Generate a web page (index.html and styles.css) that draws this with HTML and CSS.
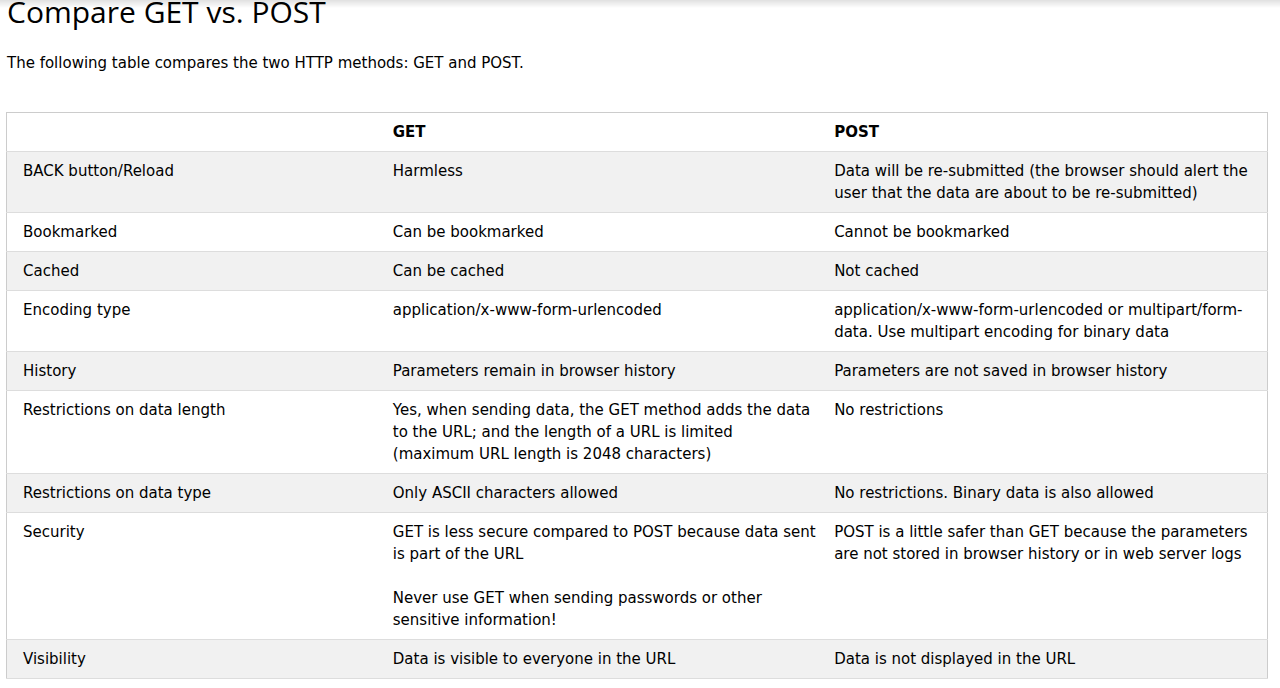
FILE: index.html
```html
<!DOCTYPE html>
<html lang="en">
<head>
<meta charset="utf-8">
<title>Compare GET vs. POST</title>
<link rel="stylesheet" href="styles.css">
</head>
<body>
<div class="topshadow"></div>
<main class="content">
  <h2 class="title">Compare GET vs. POST</h2>
  <p class="intro">The following table compares the two HTTP methods: GET and POST.</p>
  <table class="cmp">
    <colgroup>
      <col class="c1">
      <col class="c2">
      <col class="c3">
    </colgroup>
    <thead>
      <tr><th></th><th>GET</th><th>POST</th></tr>
    </thead>
    <tbody>
      <tr><td>BACK button/Reload</td><td>Harmless</td><td>Data will be re-submitted (the browser should alert the user that the data are about to be re-submitted)</td></tr>
      <tr><td>Bookmarked</td><td>Can be bookmarked</td><td>Cannot be bookmarked</td></tr>
      <tr><td>Cached</td><td>Can be cached</td><td>Not cached</td></tr>
      <tr><td>Encoding type</td><td>application/x-www-form-urlencoded</td><td>application/x-www-form-urlencoded or multipart/form-data. Use multipart encoding for binary data</td></tr>
      <tr><td>History</td><td>Parameters remain in browser history</td><td>Parameters are not saved in browser history</td></tr>
      <tr><td>Restrictions on data length</td><td>Yes, when sending data, the GET method adds the data to the URL; and the length of a URL is limited (maximum URL length is 2048 characters)</td><td>No restrictions</td></tr>
      <tr><td>Restrictions on data type</td><td>Only ASCII characters allowed</td><td>No restrictions. Binary data is also allowed</td></tr>
      <tr><td>Security</td><td>GET is less secure compared to POST because data sent is part of the URL<br><br>Never use GET when sending passwords or other sensitive information!</td><td>POST is a little safer than GET because the parameters are not stored in browser history or in web server logs</td></tr>
      <tr><td>Visibility</td><td>Data is visible to everyone in the URL</td><td>Data is not displayed in the URL</td></tr>
    </tbody>
  </table>
</main>
</body>
</html>
```

FILE: styles.css
```css
html, body {
  margin: 0;
  padding: 0;
  background: #fff;
}
body {
  font-family: "DejaVu Sans", Verdana, sans-serif;
  font-size: 15px;
  line-height: 22px;
  color: #000;
}
.topshadow {
  position: fixed;
  top: 0;
  left: 0;
  right: 0;
  height: 8px;
  background: linear-gradient(to bottom, rgba(0,0,0,0.12), rgba(0,0,0,0));
  pointer-events: none;
}
.content {
  padding: 0 12px 0 6px;
}
.title {
  font-family: "Open Sans", "Segoe UI", sans-serif;
  font-weight: 400;
  font-size: 30px;
  line-height: 40px;
  margin: -8px 0 0 1px;
  color: #000;
}
.intro {
  margin: 20px 0 38px 1px;
  color: #000;
}
.cmp {
  width: 100%;
  border-collapse: collapse;
  border: 1px solid #ccc;
  table-layout: fixed;
}
.c1 { width: 30%; }
.c2 { width: 35%; }
.c3 { width: 35%; }
.cmp th, .cmp td {
  padding: 8px 8px;
  text-align: left;
  vertical-align: top;
  font-weight: 400;
}
.cmp th {
  font-weight: 700;
}
.cmp th:first-child, .cmp td:first-child {
  padding-left: 16px;
}
.cmp tr {
  border-bottom: 1px solid #ddd;
}
.cmp tbody tr:nth-child(odd) {
  background: #f1f1f1;
}
```
